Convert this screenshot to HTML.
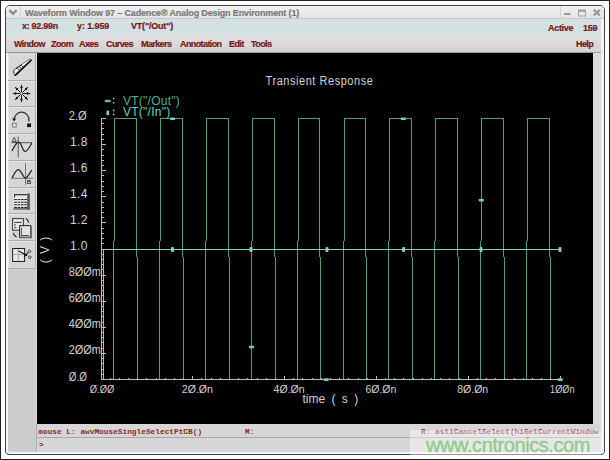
<!DOCTYPE html>
<html><head><meta charset="utf-8">
<style>
*{margin:0;padding:0;box-sizing:border-box}
html,body{width:610px;height:460px;overflow:hidden;background:#fff}
body{position:relative;font-family:"Liberation Sans",sans-serif}
.a{position:absolute}
.t{position:absolute;white-space:nowrap;font-weight:bold;font-size:9px;color:#7a1616;line-height:10px;-webkit-text-stroke:0.2px currentColor}
.m{position:absolute;white-space:nowrap;font-family:"Liberation Mono",monospace;font-weight:bold;font-size:7.8px;color:#8a2a2a;line-height:8px}
</style></head><body>
<!-- outer image border -->
<div class="a" style="left:0;top:0;width:610px;height:460px;border:1px solid #222"></div>
<!-- window frame -->
<div class="a" style="left:5px;top:5px;width:600px;height:450px;border:1px solid #444;border-radius:5px;background:#d6d6d6;overflow:hidden">
</div>
<!-- title bar -->
<div class="a" style="left:6px;top:6px;width:598px;height:12px;background:linear-gradient(#f0f0f0,#e4e4e4);border-radius:4px 4px 0 0"></div>
<div class="a" style="left:6px;top:18px;width:598px;height:1px;background:#c4c8c8"></div>
<div class="a" style="left:20px;top:6px;width:1px;height:12px;background:#d4d4d4"></div>
<div class="a" style="left:560px;top:6px;width:1px;height:12px;background:#d4d4d4"></div>
<svg class="a" style="left:0;top:0" width="610" height="30">
 <path d="M9.4 10.2 L13 13.8 L16.6 10.2" fill="none" stroke="#8c8c8c" stroke-width="2.4"/>
 <rect x="564" y="13" width="6.5" height="2" fill="#9a9a9a"/>
 <rect x="578.5" y="10" width="7" height="6" fill="none" stroke="#a0a0a0" stroke-width="1"/>
 <rect x="578.5" y="10" width="7" height="1.8" fill="#a0a0a0"/>
 <path d="M593.8 9.8 L599.8 15.4 M599.8 9.8 L593.8 15.4" stroke="#999" stroke-width="2.3"/>
</svg>
<div class="t" style="left:25px;top:8px;color:#7a7a7a;letter-spacing:-0.15px">Waveform Window 97 – Cadence® Analog Design Environment (1)</div>
<!-- info bar -->
<div class="a" style="left:6px;top:19px;width:598px;height:15px;background:#d2e2e2"></div>
<div class="t" style="left:22px;top:21px;letter-spacing:-0.3px">x: 92.99n</div>
<div class="t" style="left:77px;top:21px;letter-spacing:-0.1px">y: 1.959</div>
<div class="t" style="left:131px;top:21px;letter-spacing:-0.2px">VT("/Out")</div>
<div class="t" style="left:548px;top:23px;letter-spacing:-0.3px">Active</div>
<div class="t" style="left:583px;top:23px;letter-spacing:-0.3px">159</div>
<!-- menu bar -->
<div class="a" style="left:6px;top:34px;width:595px;height:18px;background:linear-gradient(#e0e0e0,#d3d3d3)"></div>
<div class="a" style="left:6px;top:52px;width:595px;height:1px;background:#9a9a9a"></div>
<div class="t" style="left:14px;top:39px;letter-spacing:-0.6px">Window</div>
<div class="t" style="left:51px;top:39px;letter-spacing:-0.6px">Zoom</div>
<div class="t" style="left:79px;top:39px;letter-spacing:-0.6px">Axes</div>
<div class="t" style="left:106px;top:39px;letter-spacing:-0.6px">Curves</div>
<div class="t" style="left:141px;top:39px;letter-spacing:-0.6px">Markers</div>
<div class="t" style="left:180px;top:39px;letter-spacing:-0.6px">Annotation</div>
<div class="t" style="left:229px;top:39px;letter-spacing:-0.6px">Edit</div>
<div class="t" style="left:251px;top:39px;letter-spacing:-0.6px">Tools</div>
<div class="t" style="left:576px;top:39px;letter-spacing:-0.6px">Help</div>
<!-- left toolbar -->
<div class="a" style="left:6px;top:53px;width:31px;height:399px;background:#cdcdcd"></div>
<div class="a" style="left:6px;top:53px;width:2px;height:399px;background:#f4f4f4"></div><div class="a" style="left:36px;top:53px;width:1px;height:371px;background:#dedede"></div>
<!--TB-->
<svg class="a" style="left:0;top:0" width="40" height="460">
<rect x="8" y="54" width="28" height="26" fill="#d7d7d7"/>
<path d="M8.5 79.5 V54.5 H35.5" fill="none" stroke="#e6e6e6" stroke-width="1"/>
<path d="M8 80.5 H35.5 V54" fill="none" stroke="#adadad" stroke-width="1"/>
<rect x="8" y="81" width="28" height="25" fill="#d7d7d7"/>
<path d="M8.5 105.5 V81.5 H35.5" fill="none" stroke="#e6e6e6" stroke-width="1"/>
<path d="M8 106.5 H35.5 V81" fill="none" stroke="#adadad" stroke-width="1"/>
<rect x="8" y="107" width="28" height="26" fill="#d7d7d7"/>
<path d="M8.5 132.5 V107.5 H35.5" fill="none" stroke="#e6e6e6" stroke-width="1"/>
<path d="M8 133.5 H35.5 V107" fill="none" stroke="#adadad" stroke-width="1"/>
<rect x="8" y="134" width="28" height="26" fill="#d7d7d7"/>
<path d="M8.5 159.5 V134.5 H35.5" fill="none" stroke="#e6e6e6" stroke-width="1"/>
<path d="M8 160.5 H35.5 V134" fill="none" stroke="#adadad" stroke-width="1"/>
<rect x="8" y="161" width="28" height="26" fill="#d7d7d7"/>
<path d="M8.5 186.5 V161.5 H35.5" fill="none" stroke="#e6e6e6" stroke-width="1"/>
<path d="M8 187.5 H35.5 V161" fill="none" stroke="#adadad" stroke-width="1"/>
<rect x="8" y="188" width="28" height="25" fill="#d7d7d7"/>
<path d="M8.5 212.5 V188.5 H35.5" fill="none" stroke="#e6e6e6" stroke-width="1"/>
<path d="M8 213.5 H35.5 V188" fill="none" stroke="#adadad" stroke-width="1"/>
<rect x="8" y="214" width="28" height="26" fill="#d7d7d7"/>
<path d="M8.5 239.5 V214.5 H35.5" fill="none" stroke="#e6e6e6" stroke-width="1"/>
<path d="M8 240.5 H35.5 V214" fill="none" stroke="#adadad" stroke-width="1"/>
<rect x="8" y="241" width="28" height="27" fill="#d7d7d7"/>
<path d="M8.5 267.5 V241.5 H35.5" fill="none" stroke="#e6e6e6" stroke-width="1"/>
<path d="M8 268.5 H35.5 V241" fill="none" stroke="#adadad" stroke-width="1"/>
<path d="M13.6 72.6 Q13.2 70.2 15.4 68.8 L29 59.4 Q31 58.6 31.2 60.4 L17.4 74.6 Q14.2 76.2 13.6 72.6 Z" fill="#f0f0f0" stroke="#444" stroke-width="0.7"/>
<path d="M15.2 75.2 L31 60.4" stroke="#0e0e0e" stroke-width="1.6" stroke-linecap="round"/>
<path d="M13.7 73 Q13.4 70.4 15.6 68.9 L21.5 64.7" fill="none" stroke="#222" stroke-width="1"/>
<path d="M14.6 71.6 Q15 70.2 16.4 69.6" fill="none" stroke="#fff" stroke-width="1.2"/>
<path d="M17.2 67.8 l2.2 2.2 M19.2 66.4 l2.2 2.2 M21.2 65 l2.0 2.0" stroke="#2a2a2a" stroke-width="1"/>
<path d="M22.70 93.50 L30.10 93.50 M22.35 94.35 L27.86 99.86 M21.50 94.70 L21.50 102.10 M20.65 94.35 L15.14 99.86 M20.30 93.50 L12.90 93.50 M20.65 92.65 L15.14 87.14 M21.50 92.30 L21.50 84.90 M22.35 92.65 L27.86 87.14" stroke="#1a1a1a" stroke-width="1"/>
<path d="M29.90 93.50 L26.90 94.90 L26.90 92.10 Z M27.72 99.72 L24.61 98.59 L26.59 96.61 Z M21.50 101.90 L20.10 98.90 L22.90 98.90 Z M15.28 99.72 L16.41 96.61 L18.39 98.59 Z M13.10 93.50 L16.10 92.10 L16.10 94.90 Z M15.28 87.28 L18.39 88.41 L16.41 90.39 Z M21.50 85.10 L22.90 88.10 L20.10 88.10 Z M27.72 87.28 L26.59 90.39 L24.61 88.41 Z" fill="#111"/>
<path d="M14.3 119.5 A7.3 7.3 0 0 1 28.9 119.5 V121.5" fill="none" stroke="#333" stroke-width="1.3"/>
<path d="M12.2 118.6 L16 118.6 L14.1 121.6 Z" fill="#111"/>
<rect x="12.6" y="123.4" width="3.6" height="3.6" fill="#eee" stroke="#777" stroke-width="1"/>
<rect x="27.1" y="123.5" width="4" height="3.6" fill="#111"/>
<path d="M18.2 136.5 V157.5 M11.3 142.7 H32" stroke="#555" stroke-width="1"/>
<path d="M12.3 141.6 L14.2 137.4 L16.2 141.6 Z" fill="#f4f4f4" stroke="#444" stroke-width="1"/>
<path d="M11.8 151 C14.5 147 16.2 142.2 18.6 142.2 C21.6 142.2 22.4 151.4 25.2 151.4 C28 151.4 30 146 31.8 143" fill="none" stroke="#222" stroke-width="1.2"/>
<path d="M25.5 163 V185 M11.3 178.3 H33" stroke="#777" stroke-width="1"/>
<path d="M12.1 178 C14.5 173 16 169.6 18.2 169.6 C21 169.6 23.5 178.2 25.4 178.2 C27 178.2 29.5 173.5 31.8 170" fill="none" stroke="#222" stroke-width="1.3"/>
<text x="26.8" y="184.2" font-family="Liberation Sans" font-weight="bold" font-size="6.2" fill="#222">B</text>
<rect x="13.4" y="193" width="14" height="16" fill="#e4e4e4"/>
<rect x="27.2" y="193.5" width="2.6" height="15.9" fill="#555"/>
<rect x="13.4" y="208.2" width="16.4" height="1.4" fill="#555"/>
<path d="M14.6 197.5 V194.6 H26.8" fill="none" stroke="#333" stroke-width="1.2"/>
<rect x="14.2" y="198.9" width="2.6" height="1.3" fill="#222"/><rect x="14.2" y="197.8" width="2.6" height="1.1" fill="#fafafa"/><rect x="14.2" y="201.5" width="2.6" height="1.3" fill="#222"/><rect x="14.2" y="200.4" width="2.6" height="1.1" fill="#fafafa"/><rect x="14.2" y="204.1" width="2.6" height="1.3" fill="#222"/><rect x="14.2" y="203.0" width="2.6" height="1.1" fill="#fafafa"/><rect x="14.2" y="206.7" width="2.6" height="1.3" fill="#222"/><rect x="14.2" y="205.6" width="2.6" height="1.1" fill="#fafafa"/><rect x="17.6" y="198.9" width="2.6" height="1.3" fill="#222"/><rect x="17.6" y="197.8" width="2.6" height="1.1" fill="#fafafa"/><rect x="17.6" y="201.5" width="2.6" height="1.3" fill="#222"/><rect x="17.6" y="200.4" width="2.6" height="1.1" fill="#fafafa"/><rect x="17.6" y="204.1" width="2.6" height="1.3" fill="#222"/><rect x="17.6" y="203.0" width="2.6" height="1.1" fill="#fafafa"/><rect x="17.6" y="206.7" width="2.6" height="1.3" fill="#222"/><rect x="17.6" y="205.6" width="2.6" height="1.1" fill="#fafafa"/><rect x="21" y="198.9" width="2.6" height="1.3" fill="#222"/><rect x="21" y="197.8" width="2.6" height="1.1" fill="#fafafa"/><rect x="21" y="201.5" width="2.6" height="1.3" fill="#222"/><rect x="21" y="200.4" width="2.6" height="1.1" fill="#fafafa"/><rect x="21" y="204.1" width="2.6" height="1.3" fill="#222"/><rect x="21" y="203.0" width="2.6" height="1.1" fill="#fafafa"/><rect x="21" y="206.7" width="2.6" height="1.3" fill="#222"/><rect x="21" y="205.6" width="2.6" height="1.1" fill="#fafafa"/><rect x="24.3" y="198.9" width="2.6" height="1.3" fill="#222"/><rect x="24.3" y="197.8" width="2.6" height="1.1" fill="#fafafa"/><rect x="24.3" y="201.5" width="2.6" height="1.3" fill="#222"/><rect x="24.3" y="200.4" width="2.6" height="1.1" fill="#fafafa"/><rect x="24.3" y="204.1" width="2.6" height="1.3" fill="#222"/><rect x="24.3" y="203.0" width="2.6" height="1.1" fill="#fafafa"/><rect x="24.3" y="206.7" width="2.6" height="1.3" fill="#222"/><rect x="24.3" y="205.6" width="2.6" height="1.1" fill="#fafafa"/>
<rect x="12.6" y="218.6" width="10.8" height="11.6" fill="#e8e8e8" stroke="#333" stroke-width="1"/>
<path d="M14.2 222.4 H21.5 M14.2 225 H16 M14.2 227.6 H16.5" stroke="#333" stroke-width="1"/>
<rect x="19.6" y="225.6" width="11.2" height="11.6" fill="#e2e2e2" stroke="#222" stroke-width="1"/>
<path d="M31.2 226.4 V237.6 H20.4" fill="none" stroke="#666" stroke-width="1.4"/>
<path d="M21.4 227.5 V235.5 H29" fill="none" stroke="#444" stroke-width="0.9"/>
<path d="M25.8 218.4 Q28.4 219.6 28.6 222.6" fill="none" stroke="#222" stroke-width="1.1"/>
<path d="M13.6 232.8 Q13.8 236 16.6 237" fill="none" stroke="#222" stroke-width="1.1"/>
<rect x="12.6" y="248.5" width="12" height="13" fill="#e6e6e6" stroke="#222" stroke-width="1"/>
<path d="M18.3 249 V261 M13 254.5 H24" stroke="#aaa" stroke-width="1"/>
<path d="M18.6 251.1 L27.2 255.4 M24 256.8 L28 252.6" stroke="#111" stroke-width="1.1"/>
<circle cx="29.4" cy="251.4" r="1.3" fill="none" stroke="#333" stroke-width="0.9"/>
<circle cx="29.8" cy="257.2" r="1.3" fill="none" stroke="#333" stroke-width="0.9"/>
</svg>
<!--/TB-->
<!-- plot -->
<div class="a" style="left:37px;top:53px;width:556px;height:371px;background:#000"></div>
<!--PLOT-->
<svg class="a" style="left:0;top:0" width="610" height="460">
<path d="M101 379.5 H114 M113.5 379.5 V241 M114.5 241 V118.5 M114 118.5 H137 M136.5 118.5 V257 M137.5 257 V379.5 M137 379.5 H160 M159.5 379.5 V241 M160.5 241 V118.5 M160 118.5 H183 M182.5 118.5 V257 M183.5 257 V379.5 M183 379.5 H206 M205.5 379.5 V241 M206.5 241 V118.5 M206 118.5 H229 M228.5 118.5 V257 M229.5 257 V379.5 M229 379.5 H252 M251.5 379.5 V241 M252.5 241 V118.5 M252 118.5 H275 M274.5 118.5 V257 M275.5 257 V379.5 M275 379.5 H298 M297.5 379.5 V241 M298.5 241 V118.5 M298 118.5 H320 M319.5 118.5 V257 M320.5 257 V379.5 M320 379.5 H344 M343.5 379.5 V241 M344.5 241 V118.5 M344 118.5 H366 M365.5 118.5 V257 M366.5 257 V379.5 M366 379.5 H389 M388.5 379.5 V241 M389.5 241 V118.5 M389 118.5 H412 M411.5 118.5 V257 M412.5 257 V379.5 M412 379.5 H435 M434.5 379.5 V241 M435.5 241 V118.5 M435 118.5 H458 M457.5 118.5 V257 M458.5 257 V379.5 M458 379.5 H481 M480.5 379.5 V241 M481.5 241 V118.5 M481 118.5 H504 M503.5 118.5 V257 M504.5 257 V379.5 M504 379.5 H527 M526.5 379.5 V241 M527.5 241 V118.5 M527 118.5 H550 M549.5 118.5 V257 M550.5 257 V379.5 M550 379.5 H561" fill="none" stroke="#529e72" stroke-width="1" shape-rendering="crispEdges"/>
<polyline points="101.5,379.5 103.5,379.5 103.5,249.5 560.5,249.5" fill="none" stroke="#7ed2c0" stroke-width="1" shape-rendering="crispEdges"/>
<path d="M101.5 118 V379.5 H560.5" fill="none" stroke="#bcbcbc" stroke-width="1" shape-rendering="crispEdges"/>
<path d="M101.5 379.5 h4 M101.5 374.5 h2 M101.5 369.5 h2 M101.5 363.5 h2 M101.5 358.5 h2 M101.5 353.5 h4 M101.5 348.5 h2 M101.5 342.5 h2 M101.5 337.5 h2 M101.5 332.5 h2 M101.5 327.5 h4 M101.5 322.5 h2 M101.5 316.5 h2 M101.5 311.5 h2 M101.5 306.5 h2 M101.5 301.5 h4 M101.5 295.5 h2 M101.5 290.5 h2 M101.5 285.5 h2 M101.5 280.5 h2 M101.5 275.5 h4 M101.5 269.5 h2 M101.5 264.5 h2 M101.5 259.5 h2 M101.5 254.5 h2 M101.5 249.5 h4 M101.5 243.5 h2 M101.5 238.5 h2 M101.5 233.5 h2 M101.5 228.5 h2 M101.5 222.5 h4 M101.5 217.5 h2 M101.5 212.5 h2 M101.5 207.5 h2 M101.5 202.5 h2 M101.5 196.5 h4 M101.5 191.5 h2 M101.5 186.5 h2 M101.5 181.5 h2 M101.5 175.5 h2 M101.5 170.5 h4 M101.5 165.5 h2 M101.5 160.5 h2 M101.5 155.5 h2 M101.5 149.5 h2 M101.5 144.5 h4 M101.5 139.5 h2 M101.5 134.5 h2 M101.5 128.5 h2 M101.5 123.5 h2 M101.5 118.5 h4" stroke="#bcbcbc" stroke-width="1" shape-rendering="crispEdges"/>
<path d="M101.5 379.5 v-4 M110.5 379.5 v-2 M119.5 379.5 v-2 M128.5 379.5 v-2 M137.5 379.5 v-2 M146.5 379.5 v-2 M156.5 379.5 v-2 M165.5 379.5 v-2 M174.5 379.5 v-2 M183.5 379.5 v-2 M192.5 379.5 v-4 M201.5 379.5 v-2 M211.5 379.5 v-2 M220.5 379.5 v-2 M229.5 379.5 v-2 M238.5 379.5 v-2 M247.5 379.5 v-2 M257.5 379.5 v-2 M266.5 379.5 v-2 M275.5 379.5 v-2 M284.5 379.5 v-4 M293.5 379.5 v-2 M302.5 379.5 v-2 M312.5 379.5 v-2 M321.5 379.5 v-2 M330.5 379.5 v-2 M339.5 379.5 v-2 M348.5 379.5 v-2 M358.5 379.5 v-2 M367.5 379.5 v-2 M376.5 379.5 v-4 M385.5 379.5 v-2 M394.5 379.5 v-2 M403.5 379.5 v-2 M413.5 379.5 v-2 M422.5 379.5 v-2 M431.5 379.5 v-2 M440.5 379.5 v-2 M449.5 379.5 v-2 M459.5 379.5 v-2 M468.5 379.5 v-4 M477.5 379.5 v-2 M486.5 379.5 v-2 M495.5 379.5 v-2 M504.5 379.5 v-2 M514.5 379.5 v-2 M523.5 379.5 v-2 M532.5 379.5 v-2 M541.5 379.5 v-2 M550.5 379.5 v-2 M560.5 379.5 v-4" stroke="#bcbcbc" stroke-width="1" shape-rendering="crispEdges"/>
<rect x="170.0" y="117.5" width="5.2" height="2.6" rx="0.8" fill="#6cd8b0"/>
<rect x="248.9" y="345.7" width="5.2" height="2.6" rx="0.8" fill="#6cd8b0"/>
<rect x="323.59999999999997" y="378.3" width="5.2" height="2.6" rx="0.8" fill="#6cd8b0"/>
<rect x="400.7" y="117.5" width="5.2" height="2.6" rx="0.8" fill="#6cd8b0"/>
<rect x="478.7" y="199.0" width="5.2" height="2.6" rx="0.8" fill="#6cd8b0"/>
<rect x="557.6" y="378.3" width="5.2" height="2.6" rx="0.8" fill="#6cd8b0"/>
<rect x="171.0" y="247" width="3" height="5" rx="1" fill="#7ed2c0"/>
<rect x="249.5" y="247" width="3" height="5" rx="1" fill="#7ed2c0"/>
<rect x="325.5" y="247" width="3" height="5" rx="1" fill="#7ed2c0"/>
<rect x="402.1" y="247" width="3" height="5" rx="1" fill="#7ed2c0"/>
<rect x="479.5" y="247" width="3" height="5" rx="1" fill="#7ed2c0"/>
<rect x="558.5" y="247" width="3" height="5" rx="1" fill="#7ed2c0"/>
<rect x="104.8" y="99.8" width="5.8" height="2.5" rx="0.8" fill="#62c090"/>
<rect x="106.5" y="110.6" width="2.6" height="4.6" rx="0.8" fill="#7ed2c0"/>
</svg>
<svg class="a" style="left:0;top:0" width="610" height="460" font-family="Liberation Sans" fill="#d2d2d2">
<text x="68.8" y="119.5" font-size="12" letter-spacing="0" textLength="18" lengthAdjust="spacingAndGlyphs">2.Ø</text>
<text x="70.0" y="145.6" font-size="12" letter-spacing="0.4">1.8</text>
<text x="70.0" y="171.7" font-size="12" letter-spacing="0.4">1.6</text>
<text x="70.0" y="197.8" font-size="12" letter-spacing="0.4">1.4</text>
<text x="70.0" y="223.9" font-size="12" letter-spacing="0.4">1.2</text>
<text x="70.0" y="250.0" font-size="12" letter-spacing="0.4">1.0</text>
<text x="68.8" y="276.1" font-size="12" letter-spacing="0" textLength="32" lengthAdjust="spacingAndGlyphs">8ØØm</text>
<text x="68.8" y="302.2" font-size="12" letter-spacing="0" textLength="32" lengthAdjust="spacingAndGlyphs">6ØØm</text>
<text x="68.8" y="328.3" font-size="12" letter-spacing="0" textLength="32" lengthAdjust="spacingAndGlyphs">4ØØm</text>
<text x="68.8" y="354.4" font-size="12" letter-spacing="0" textLength="32" lengthAdjust="spacingAndGlyphs">2ØØm</text>
<text x="68.8" y="380.5" font-size="12" letter-spacing="0" textLength="18" lengthAdjust="spacingAndGlyphs">Ø.Ø</text>
<text x="89.8" y="392.5" font-size="11.7" letter-spacing="0" textLength="24.5" lengthAdjust="spacingAndGlyphs">Ø.ØØ</text>
<text x="181.8" y="392.5" font-size="11.7" letter-spacing="0" textLength="31" lengthAdjust="spacingAndGlyphs">2Ø.Øn</text>
<text x="273.6" y="392.5" font-size="11.7" letter-spacing="0" textLength="31" lengthAdjust="spacingAndGlyphs">4Ø.Øn</text>
<text x="365.40000000000003" y="392.5" font-size="11.7" letter-spacing="0" textLength="31" lengthAdjust="spacingAndGlyphs">6Ø.Øn</text>
<text x="457.2" y="392.5" font-size="11.7" letter-spacing="0" textLength="31" lengthAdjust="spacingAndGlyphs">8Ø.Øn</text>
<text x="550.0999999999999" y="392.5" font-size="11.7" letter-spacing="0" textLength="24.5" lengthAdjust="spacingAndGlyphs">1ØØn</text>
<text x="0" y="0" font-size="11" letter-spacing="0.55" transform="translate(265.6,84.6) scale(1,1.12)">Transient Response</text>
<text x="123" y="105" font-size="12" letter-spacing="0.25" fill="#52b07c">VT("/Out")</text>
<text x="123" y="116" font-size="12" letter-spacing="0.25" fill="#62d0bc">VT("/In")</text>
<rect x="112.9" y="97.8" width="1.5" height="1.5" fill="#b0dcc8"/>
<rect x="112.9" y="102" width="1.5" height="1.5" fill="#b0dcc8"/>
<rect x="112.9" y="109.7" width="1.5" height="1.5" fill="#b0dcc8"/>
<rect x="112.9" y="113.7" width="1.5" height="1.5" fill="#b0dcc8"/>
<text x="302.5" y="403" font-size="12" letter-spacing="0" word-spacing="3">time ( s )</text>
<text x="0" y="0" font-size="12" transform="translate(48.8,263.3) rotate(-90)" word-spacing="2">( V )</text>
</svg>
<!--/PLOT-->
<!-- right strip -->
<div class="a" style="left:593px;top:53px;width:9px;height:371px;background:#dcdcdc"></div>
<div class="a" style="left:601px;top:19px;width:3px;height:433px;background:#f4f4f4"></div>
<!-- status -->
<div class="a" style="left:37px;top:424px;width:564px;height:13px;background:#d6d6d6"></div>
<div class="a" style="left:37px;top:437px;width:564px;height:1px;background:#a8a8a8"></div>
<div class="a" style="left:37px;top:438px;width:564px;height:14px;background:#d6d6d6"></div>
<div class="a" style="left:36px;top:424px;width:1px;height:28px;background:#b0b0b0"></div>
<div class="a" style="left:6px;top:452px;width:598px;height:2px;background:#f6f6f6"></div>
<div class="m" style="left:38.3px;top:428px">mouse L: awvMouseSingleSelectPtCB()</div>
<div class="m" style="left:245px;top:428px">M:</div>
<div class="m" style="left:421px;top:428px">R: astiCancelSelect(hiGetCurrentWindow</div>
<div class="m" style="left:39px;top:441px">&gt;</div>
<!--CORNER-->
<svg class="a" style="left:0;top:440px" width="610" height="20">
 <path d="M4 8 V16 H12 V15.5 H10 Q5.5 15.5 5.5 11 V8 Z" fill="#fff"/>
 <path d="M5.5 8 V11 Q5.5 14.5 10 14.5 H14" fill="none" stroke="#444" stroke-width="1"/>
 <path d="M8 11 Q8 12.5 10 12.5" fill="none" stroke="#f4f4f4" stroke-width="2"/>
 <path d="M606 8 V16 H598 V15.5 H600 Q604.5 15.5 604.5 11 V8 Z" fill="#fff"/>
 <path d="M604.5 8 V11 Q604.5 14.5 600 14.5 H596" fill="none" stroke="#444" stroke-width="1"/>
</svg>
<!--/CORNER-->
<!--WM-->
<div class="a" style="left:410px;top:430px;width:191px;height:26px;background:rgba(255,255,255,0.42)"></div>
<div class="a" style="left:426px;top:434px;font:20px 'Liberation Sans',sans-serif;letter-spacing:-0.42px;color:#8fcb8c;-webkit-text-stroke:0.35px #8fcb8c;white-space:nowrap;line-height:22px">www.cntronics.com</div>
<!--/WM-->
</body></html>
